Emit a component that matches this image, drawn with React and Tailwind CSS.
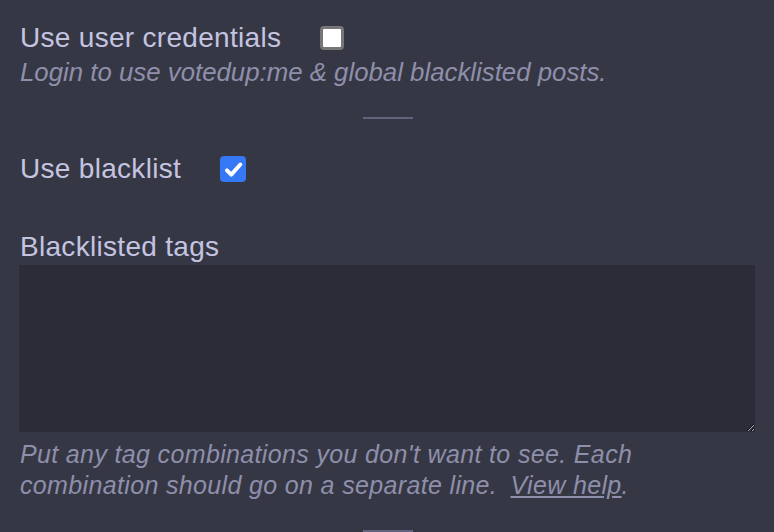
import React, { useState } from "react";

const Check = ({ checked, onChange }) => (
	<button
		type="button"
		onClick={onChange}
		className={`ml-[39px] flex items-center justify-center rounded-[4px] ${
			checked ? "h-[26px] w-[26px] bg-[#3478f6]" : "h-6 w-6 border-[3px] border-[#767676] bg-white"
		}`}
	>
		{checked && (
			<svg viewBox="0 0 16 16" className="h-[21px] w-[21px]" fill="none">
				<path d="M3 8.6l3.3 3.3L13.2 4.2" stroke="white" strokeWidth="3" strokeLinecap="round" strokeLinejoin="round" />
			</svg>
		)}
	</button>
);

export default function App() {
	const [creds, setCreds] = useState(false);
	const [blacklist, setBlacklist] = useState(true);

	return (
		<div className="min-h-[532px] overflow-hidden bg-[#363744] pl-[20px] pr-[18px] pt-[22px] font-['Liberation_Sans',Arial,sans-serif] text-[#c4c4e0]">
			<div className="flex items-center">
				<span className="text-[28px] leading-[32px] tracking-[0.3px]">Use user credentials</span>
				<Check checked={creds} onChange={() => setCreds(!creds)} />
			</div>
			<p className="mt-[3px] text-[25.8px] italic leading-[30px] text-[#8e8fab]">
				Login to use votedup:me &amp; global blacklisted posts.
			</p>

			<div className="mx-auto mt-[30px] h-[2px] w-[50px] bg-[#62637f]" />

			<div className="mt-[34px] flex items-center">
				<span className="text-[28px] leading-[32px] tracking-[0.3px]">Use blacklist</span>
				<Check checked={blacklist} onChange={() => setBlacklist(!blacklist)} />
			</div>

			<div className="mt-[46px] text-[28px] leading-[32px] tracking-[0.3px]">Blacklisted tags</div>
			<textarea className="-ml-px mt-[2px] block h-[167px] w-[736px] bg-[#2b2c38]" />
			<p className="mt-[7px] text-[25px] italic leading-[31px] tracking-[0.35px] text-[#8e8fab]">
				Put any tag combinations you don't want to see. Each
				<br />
				combination should go on a separate line.{" "}
				<a href="#" className="ml-[6px] underline">View help</a>.
			</p>
			<div className="mx-auto mt-[29px] h-[2px] w-[50px] bg-[#62637f]" />
		</div>
	);
}
